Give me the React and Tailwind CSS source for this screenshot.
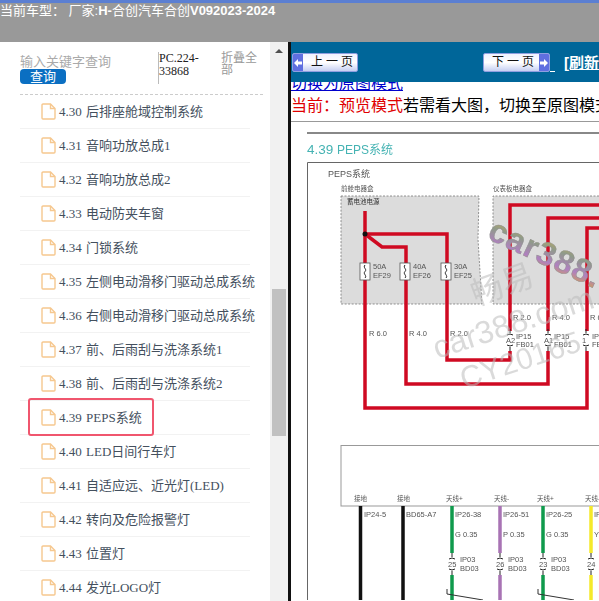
const SERIF = "font-['Liberation_Serif','Noto_Sans_CJK_SC',serif]";

const ITEMS = [
  "4.30 后排座舱域控制系统",
  "4.31 音响功放总成1",
  "4.32 音响功放总成2",
  "4.33 电动防夹车窗",
  "4.34 门锁系统",
  "4.35 左侧电动滑移门驱动总成系统",
  "4.36 右侧电动滑移门驱动总成系统",
  "4.37 前、后雨刮与洗涤系统1",
  "4.38 前、后雨刮与洗涤系统2",
  "4.39 PEPS系统",
  "4.40 LED日间行车灯",
  "4.41 自适应远、近光灯(LED)",
  "4.42 转向及危险报警灯",
  "4.43 位置灯",
  "4.44 发光LOGO灯",
];

function FileIcon() {
  return (
    <svg width="15" height="17" viewBox="0 0 15 17" className="shrink-0" fill="none" stroke="#f6c88f" strokeWidth="1.4">
      <path d="M1 2a1 1 0 0 1 1-1h7.5L14 5.5V15a1 1 0 0 1-1 1H2a1 1 0 0 1-1-1z" />
      <path d="M9.5 1v4.5H14" />
    </svg>
  );
}

function Sidebar() {
  return (
    <div className="flex w-[291px] shrink-0 border-r-[3px] border-[#111] bg-white">
      <div className="w-[270px] shrink-0 overflow-hidden">
        <div className="mx-[20px] flex h-[53px] w-[243px] items-start border-b border-dashed border-[#ccc] pt-[13px]">
          <div className="w-[138px] shrink-0">
            <div className="text-[13px] leading-[14px] text-[#aaa]">输入关键字查询</div>
            <div className="flex h-[15px] w-[46px] items-center justify-center rounded-[4px] bg-[#0b6fc2] text-[13px] leading-[15px] text-white">
              查询
            </div>
          </div>
          <div className={`-mt-[3px] h-[32px] w-[63px] shrink-0 border-l border-[#bbb] text-[12px] leading-[13px] text-[#222] ${SERIF}`}>
            PC.224-33868
          </div>
          <div className="-mt-[3px] w-[42px] text-[12px] leading-[12px] text-[#999]">折叠全部</div>
        </div>
        <ul className={`text-[13px] text-[#44505e] [word-spacing:1px] ${SERIF}`}>
          {ITEMS.map((item) => (
            <li key={item} className="relative mx-[20px] flex h-[34px] w-[230px] items-center gap-[3px] whitespace-nowrap border-b border-[#f2f2f2] pl-[21px]">
              <FileIcon />
              {item}
              {item.startsWith("4.39") ? (
                <span className="absolute left-[8px] top-[-3px] h-[38px] w-[126px] rounded-[3px] border-2 border-[#f0566e]" />
              ) : null}
            </li>
          ))}
        </ul>
      </div>
      <div className="flex w-[18px] shrink-0 flex-col items-center bg-[#f1f1f1] pt-[7px]">
        <span className="h-0 w-0 border-x-[4px] border-b-[4px] border-x-transparent border-b-[#505050]" />
        <span className="mt-[236px] h-[147px] w-[14px] bg-[#c1c1c1]" />
      </div>
    </div>
  );
}

function PageButton({ label, next }) {
  return (
    <div className={`flex h-[19px] w-[67px] items-stretch overflow-hidden rounded-[2px] border border-[#8f9fe0] bg-gradient-to-b from-[#f0f2ff] via-white to-[#c6cff2] ${next ? "flex-row-reverse" : ""}`}>
      <span className="flex w-[10px] shrink-0 items-center justify-center bg-[#5f6fe0]">
        <svg width="8" height="8" viewBox="0 0 8 8" fill="#fff">
          <path d={next ? "M0 2.5h4V0l4 4-4 4V5.500H0z" : "M8 2.500H4V0L0 4l4 4V5.500h4z"} />
        </svg>
      </span>
      <span className={`flex-1 whitespace-nowrap pl-[8px] text-[12px] leading-[17px] tracking-[3px] text-[#111] ${SERIF}`}>{label}</span>
    </div>
  );
}

function Fuse({ x }) {
  return (
    <g>
      <rect x={x - 5} y="264" width="10" height="17" fill="#fff" stroke="#555" strokeWidth="0.8" />
      <path d={`M${x} 266c-2.500 3 2.500 4 0 6.500s2.500 4 0 6.500`} fill="none" stroke="#222" strokeWidth="1" />
    </g>
  );
}

function Label({ x, y, children, size = 7.500, fill = "#555" }) {
  return (
    <text x={x} y={y} fontSize={size} fill={fill} fontFamily="'Liberation Sans','Noto Sans CJK SC',sans-serif">
      {children}
    </text>
  );
}

function Connector({ x, y, num }) {
  return (
    <g>
      <path d={`M${x} ${y - 11}v4M${x - 3} ${y - 5}q3 -2 6 0M${x - 3} ${y + 5}q3 2 6 0M${x} ${y + 7}v4`} fill="none" stroke="#222" strokeWidth="1" />
      <Label x={x - 4} y={y + 3} size={7.500}>{num}</Label>
    </g>
  );
}

const WIRES = [
  { x: 452, color: "#0f9a4c", top: "IP26-38", gauge: "G 0.35", num: "25" },
  { x: 500, color: "#a873b4", top: "IP26-51", gauge: "P 0.35", num: "26" },
  { x: 543, color: "#0f9a4c", top: "IP26-25", gauge: "G 0.35", num: "23" },
  { x: 591, color: "#f5e92a", top: "IP26-26", gauge: "Y 0.35", num: "24" },
];

function Diagram() {
  const red = "#cf0a22";
  return (
    <svg viewBox="291 123 308 478" className="block h-[478px] w-[308px] blur-[0.3px]">
      <defs>
        <linearGradient id="wm" x1="0" y1="0" x2="0.5" y2="1">
          <stop offset="0" stopColor="#e0b840" />
          <stop offset="0.4" stopColor="#8f9a8a" />
          <stop offset="0.7" stopColor="#b080c0" />
          <stop offset="1" stopColor="#d8a840" />
        </linearGradient>
      </defs>
      <path d="M307 134H599" stroke="#888" strokeWidth="2" />
      <text x="307" y="155" fill="#45b3b3" fontFamily="'Liberation Sans','Noto Sans CJK SC',sans-serif">
        <tspan fontSize="13.500">4.39 </tspan>
        <tspan fontSize="12">PEPS系统</tspan>
      </text>
      <path d="M599 163.500H307.500V601" fill="none" stroke="#666" strokeWidth="1" />
      <Label x={328} y={178} size={9}>PEPS系统</Label>
      <Label x={341} y={192} size={6.500}>前舱电器盒</Label>
      <Label x={493} y={192} size={6.500}>仪表板电器盒</Label>
      <path d="M341 197H479L478 240 482 305H341Z" fill="#dcdcdc" stroke="#777" strokeWidth="0.8" strokeDasharray="2 1.500" />
      <path d="M599 197H493V305H599" fill="#dcdcdc" stroke="#777" strokeWidth="0.8" strokeDasharray="2 1.500" />
      <Label x={347} y={205} size={6.500} fill="#333">蓄电池电源</Label>

      <g fill="none" stroke={red} strokeWidth="3.500">
        <path d="M365 212V409H587V352" />
        <path d="M365 235H447V361H510V352" />
        <path d="M365 235L382 248H406V385H548V352" />
        <path d="M510 332V206H599" />
        <path d="M548 332V219H599" />
        <path d="M587 332V229H599" />
      </g>
      <circle cx="365" cy="235" r="2.500" fill="#111" />
      <Fuse x={365} />
      <Fuse x={405} />
      <Fuse x={446} />
      <Label x={373} y={270}>50A</Label>
      <Label x={373} y={279}>EF29</Label>
      <Label x={413} y={270}>40A</Label>
      <Label x={413} y={279}>EF26</Label>
      <Label x={454} y={270}>30A</Label>
      <Label x={454} y={279}>EF25</Label>
      <Label x={369} y={337}>R 6.0</Label>
      <Label x={409} y={337}>R 4.0</Label>
      <Label x={450} y={337}>R 2.0</Label>
      <Label x={513} y={321}>R 2.0</Label>
      <Label x={552} y={321}>R 4.0</Label>
      <Label x={590} y={321}>R 6.0</Label>
      <Connector x={510} y={341} num="A2" />
      <Connector x={548} y={341} num="A1" />
      <Connector x={586} y={341} num="1" />
      <Label x={516} y={340}>IP15</Label>
      <Label x={516} y={348}>FB01</Label>
      <Label x={554} y={340}>IP15</Label>
      <Label x={554} y={348}>FB01</Label>
      <Label x={592} y={340}>IP15</Label>
      <Label x={592} y={348}>FB01</Label>

      <rect x="341" y="446.500" width="270" height="60.500" fill="#fff" stroke="#999" />
      {[[360, "接地"], [403, "接地"], [452, "天线+"], [500, "天线-"], [543, "天线+"], [591, "天线-"]].map(([x, t], i) => (
        <Label key={i} x={x - 6} y={502} size={6.500}>{t}</Label>
      ))}
      <path d="M360.500 507V601M403 507V601" stroke="#111" strokeWidth="3.500" />
      <Label x={364} y={518}>IP24-5</Label>
      <Label x={406} y={518}>BD65-A7</Label>
      {WIRES.map((w) => (
        <g key={w.x}>
          <path d={`M${w.x} 507V554M${w.x} 576V601`} stroke={w.color} strokeWidth="3.500" />
          <Label x={w.x + 3} y={518}>{w.top}</Label>
          <Label x={w.x + 3} y={538}>{w.gauge}</Label>
          <Connector x={w.x} y={565} num={w.num} />
          <Label x={w.x + 8} y={563}>IP03</Label>
          <Label x={w.x + 8} y={572}>BD03</Label>
        </g>
      ))}
      <path d="M447 590V595L483 601M538 590V595L574 601" fill="none" stroke="#333" strokeWidth="1" />

      <g fontFamily="'Liberation Sans','Noto Sans CJK SC',sans-serif" fill="#bbb" fillOpacity="0.55">
        <text x="0" y="0" fontSize="32" transform="translate(476 307) rotate(-20)">畅易</text>
        <text x="0" y="0" fontSize="32" transform="translate(437 360) rotate(-18)">car388.com</text>
        <text x="0" y="0" fontSize="30" transform="translate(464 390) rotate(-18)">CY20165</text>
      </g>
      <text x="0" y="0" fontSize="33" fontWeight="700" letterSpacing="1" fill="url(#wm)" stroke="#8a8a8a" strokeWidth="0.4" fontFamily="'Liberation Sans',sans-serif" transform="translate(486 239) rotate(25)">car388.com</text>
    </svg>
  );
}

function Viewer() {
  return (
    <div className="min-w-0 flex-1 overflow-hidden bg-white">
      <div className="flex h-[40px] items-start whitespace-nowrap bg-[#006699] pl-px pt-[11px]">
        <PageButton label="上一页" />
        <div className="ml-[125px]">
          <PageButton label="下一页" next />
        </div>
        <span className="h-[19px] w-[5px] shrink-0 border-b border-white" />
        <span className="ml-[9px] text-[15px] font-bold leading-[19px] text-white underline">[刷新</span>
      </div>
      <div className="h-[11px] overflow-hidden">
        <a className="-mt-[8px] block text-[16px] leading-[19px] text-[#0000cc] underline">切换为原图模式</a>
      </div>
      <div className="h-[29px] whitespace-nowrap border-b border-[#999] pt-[3px] text-[16px] leading-[19px] text-black">
        <span className="text-[#e00000]">当前：预览模式</span>若需看大图，切换至原图模式
      </div>
      <Diagram />
    </div>
  );
}

export default function App() {
  return (
    <div className="flex h-[601px] w-[599px] flex-col overflow-hidden bg-white font-['Liberation_Sans','Noto_Sans_CJK_SC',sans-serif]">
      <div className="h-[42px] shrink-0 border-t-[3px] border-[#5b7fd2] bg-[#999] text-[13px] leading-[17px] text-white">
        <span className="-mt-px block whitespace-nowrap">
          当前车型： 厂家:<b>H-</b>合创汽车合创<b>V092023-2024</b>
        </span>
      </div>
      <div className="flex min-h-0 flex-1">
        <Sidebar />
        <Viewer />
      </div>
    </div>
  );
}
